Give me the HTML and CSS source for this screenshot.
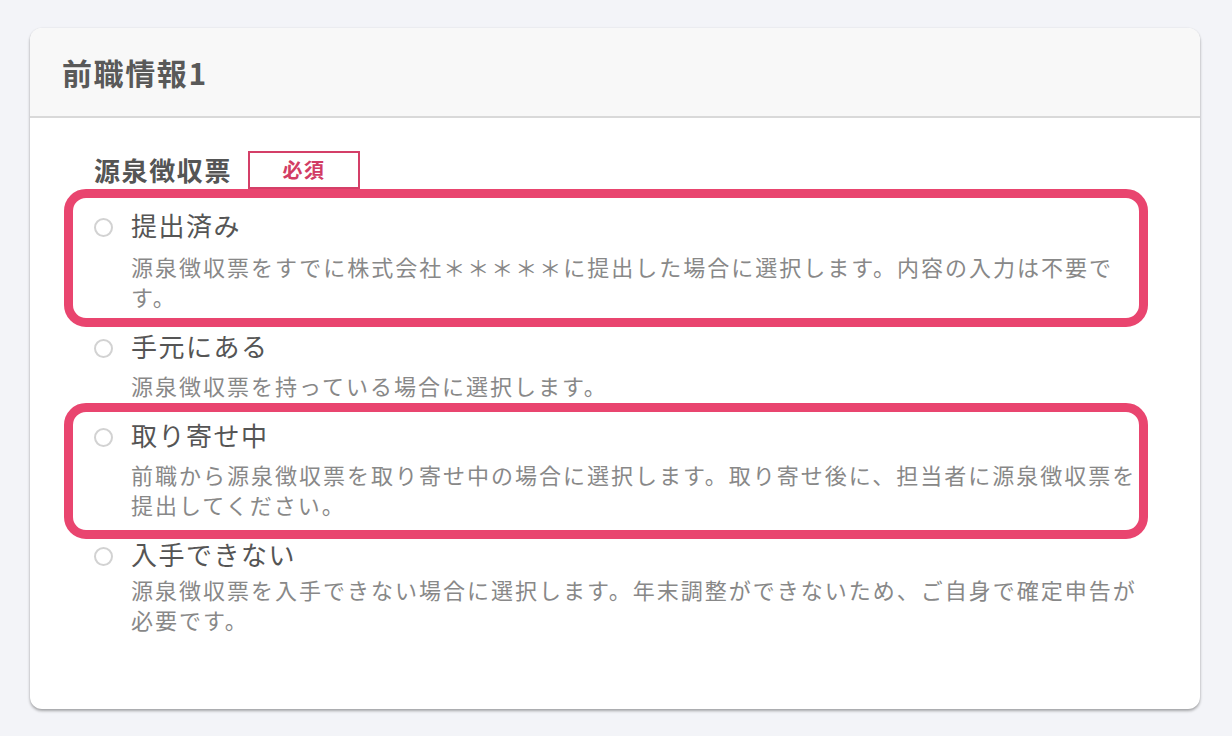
FILE: index.html
```html
<!DOCTYPE html>
<html lang="ja">
<head>
<meta charset="utf-8">
<title>前職情報1</title>
<link rel="stylesheet" href="styles.css">
</head>
<body>
<div class="card">
  <div class="card-header">
    <h2 class="card-title">前職情報1</h2>
  </div>
  <div class="card-body">
    <div class="field-row">
      <span class="field-label">源泉徴収票</span>
      <span class="badge">必須</span>
    </div>
    <ul class="options">
      <li class="option option--hl option--hl-1">
        <span class="radio"></span>
        <div class="option-text">
          <div class="option-title">提出済み</div>
          <p class="option-desc">源泉徴収票をすでに株式会社＊＊＊＊＊に提出した場合に選択します。内容の入力は不要です。</p>
        </div>
      </li>
      <li class="option">
        <span class="radio"></span>
        <div class="option-text">
          <div class="option-title">手元にある</div>
          <p class="option-desc">源泉徴収票を持っている場合に選択します。</p>
        </div>
      </li>
      <li class="option option--hl option--hl-2">
        <span class="radio"></span>
        <div class="option-text">
          <div class="option-title">取り寄せ中</div>
          <p class="option-desc">前職から源泉徴収票を取り寄せ中の場合に選択します。取り寄せ後に、担当者に源泉徴収票を提出してください。</p>
        </div>
      </li>
      <li class="option option--compact">
        <span class="radio"></span>
        <div class="option-text">
          <div class="option-title">入手できない</div>
          <p class="option-desc">源泉徴収票を入手できない場合に選択します。年末調整ができないため、ご自身で確定申告が必要です。</p>
        </div>
      </li>
    </ul>
  </div>
</div>
</body>
</html>
```

FILE: styles.css
```css
* {
  box-sizing: border-box;
}

html, body {
  margin: 0;
  padding: 0;
}

body {
  background: #f3f4f8;
  font-family: "Noto Sans CJK JP", "Noto Sans", sans-serif;
  padding: 28px 32px 26px 30px;
  width: 1232px;
  height: 736px;
}

.card {
  width: 1170px;
  height: 681px;
  background: #ffffff;
  border-radius: 12px;
  box-shadow: 0 2px 3px rgba(0, 0, 0, 0.32), 0 0 2px rgba(0, 0, 0, 0.08);
}

.card-header {
  height: 90px;
  background: #f8f8f8;
  border-bottom: 2px solid #d9d9d9;
  border-radius: 12px 12px 0 0;
  display: flex;
  align-items: center;
  padding-left: 32px;
}

.card-title {
  margin: 0;
  font-size: 30px;
  font-weight: 700;
  letter-spacing: 1.6px;
  color: #595959;
  line-height: 1;
}

.card-body {
  padding: 33px 55px 0 64px;
}

.field-row {
  display: flex;
  align-items: center;
  height: 38px;
}

.field-label {
  font-size: 26px;
  font-weight: 700;
  letter-spacing: 1.6px;
  color: #555555;
  line-height: 1;
}

.badge {
  margin-left: 16px;
  width: 112px;
  height: 38px;
  border: 2px solid #d43f68;
  color: #d23c64;
  font-size: 20px;
  font-weight: 700;
  letter-spacing: 1.5px;
  display: flex;
  align-items: center;
  justify-content: center;
  line-height: 1;
}

.options {
  list-style: none;
  margin: 18px 0 0 0;
  padding: 0;
}

.option {
  position: relative;
  display: grid;
  grid-template-columns: 20px 1fr;
  column-gap: 17px;
  margin-bottom: 17px;
}

.option--hl::before {
  content: "";
  position: absolute;
  left: -30px;
  right: -3px;
  border: 9px solid #e9456f;
  border-radius: 22px;
  pointer-events: none;
}

.option--hl-1::before {
  top: -18px;
  bottom: -16px;
}

.option--hl-2::before {
  top: -14px;
  bottom: -20px;
}

.radio {
  width: 19px;
  height: 19px;
  margin-top: 11px;
  border: 2px solid #d2d2d2;
  border-radius: 50%;
  background: #ffffff;
}

.option-title {
  font-size: 26px;
  line-height: 36px;
  letter-spacing: 1.5px;
  color: #555555;
}

.option-desc {
  margin: 6px 0 0 0;
  font-size: 22px;
  line-height: 30px;
  letter-spacing: 2px;
  color: #888888;
}

.option--hl-1 .option-desc {
  margin-top: 8px;
}

.option--compact .option-desc {
  margin-top: 2px;
}
```
